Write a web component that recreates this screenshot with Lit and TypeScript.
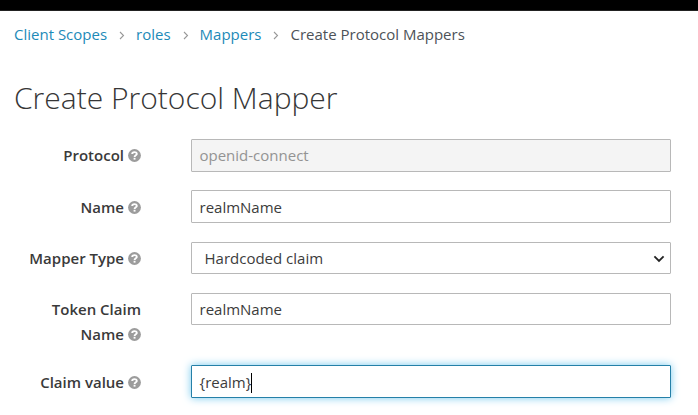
import { LitElement, html, css, svg } from "lit";
import { customElement } from "lit/decorators.js";

@customElement("help-icon")
class HelpIcon extends LitElement {
  static styles = css`
    :host { display: inline-block; width: 13px; height: 13px; margin-left: 4px; vertical-align: -1px; }
    svg { display: block; }
  `;
  render() {
    return html`<svg width="13" height="13" viewBox="0 0 13 13">
      ${svg`<circle cx="6.5" cy="6.5" r="6.4" fill="#9c9c9c"></circle>
      <path d="M4.2 5C4.2 2.5 8.8 2.5 8.8 4.9C8.8 6.3 6.6 6.3 6.6 8" fill="none" stroke="#fff" stroke-width="1.9"></path>
      <rect x="5.6" y="8.8" width="1.9" height="1.8" fill="#fff"></rect>`}
    </svg>`;
  }
}

@customElement("form-row")
class FormRow extends LitElement {
  static properties = { label: {}, value: {}, kind: {} };
  declare label: string;
  declare value: string;
  declare kind: string;
  static styles = css`
    :host { display: grid; grid-template-columns: 141px 480px; column-gap: 50px; align-items: start; }
    .label { text-align: right; font-weight: 600; line-height: 25px; padding-top: 4px; color: #3a3a3a; }
    .wrapped { padding-left: 50px; }
    .lowered { padding-top: 5px; }
    .box { box-sizing: border-box; height: 33px; border: 1px solid #b8b8b8; border-radius: 1px; padding: 0 7.5px; display: flex; align-items: center; background: #fff; color: #3c3c3c; }
    .disabled { background: #f4f4f4; color: #939393; }
    .select { height: 32px; padding: 0 5.5px 0 12.5px; justify-content: space-between; }
    .select svg { margin-top: 1px; }
    .short { height: 32px; }
    .plain, .focus { padding-top: 2px; }
    .focus { border-color: #2580a8; box-shadow: 0 0 9px #74c9ee; }
    .caret { width: 1px; height: 20px; background: #000; }
  `;
  render() {
    const wrapped = this.label.startsWith("Token") ? "wrapped" : "";
    const lowered = this.kind === "plain" || this.kind === "focus" ? "lowered" : "";
    return html`
      <div class="label ${wrapped} ${lowered}">${this.label}<help-icon></help-icon></div>
      <div class="box ${this.kind}">
        <span>${this.value}</span>
        ${this.kind === "focus" ? html`<i class="caret"></i>` : ""}
        ${this.kind === "select"
          ? html`<svg width="12" height="8" viewBox="0 0 12 8"><path d="M1.4 1.4L6 6L10.6 1.4" fill="none" stroke="#222" stroke-width="1.8"></path></svg>`
          : ""}
      </div>`;
  }
}

@customElement("app-root")
class AppRoot extends LitElement {
  static styles = css`
    :host { display: block; height: 415px; overflow: hidden; background: #fff; color: #3a3a3a; font: 15px/25px "Open Sans", "Noto Sans", sans-serif; }
    .top { height: 10px; background: #000; border-bottom: 1px solid #222; }
    .crumbs { display: flex; align-items: center; height: 25px; margin: 11px 0 0 14px; color: #4d5258; }
    .crumbs a { color: #1d8ab8; }
    .crumbs svg { margin: 1px 11px 0 12px; }
    h1 { margin: 31px 0 0 14px; font-size: 30px; line-height: 40px; font-weight: 300; color: #363636; }
    form { display: grid; grid-template-rows: 51px 52px 51px 72px 33px; margin-top: 21px; }
  `;
  render() {
    const sep = html`<svg width="6" height="9" viewBox="0 0 6 9"><path d="M1 1L4.5 4.5L1 8" fill="none" stroke="#999" stroke-width="1.1"></path></svg>`;
    return html`
      <div class="top"></div>
      <nav class="crumbs"><a>Client Scopes</a>${sep}<a>roles</a>${sep}<a>Mappers</a>${sep}<span>Create Protocol Mappers</span></nav>
      <h1>Create Protocol Mapper</h1>
      <form>
        <form-row .label=${"Protocol"} .value=${"openid-connect"} .kind=${"disabled"}></form-row>
        <form-row .label=${"Name"} .value=${"realmName"} .kind=${"plain"}></form-row>
        <form-row .label=${"Mapper Type"} .value=${"Hardcoded claim"} .kind=${"select"}></form-row>
        <form-row .label=${"Token Claim Name"} .value=${"realmName"} .kind=${"short"}></form-row>
        <form-row .label=${"Claim value"} .value=${"{realm}"} .kind=${"focus"}></form-row>
      </form>`;
  }
}
